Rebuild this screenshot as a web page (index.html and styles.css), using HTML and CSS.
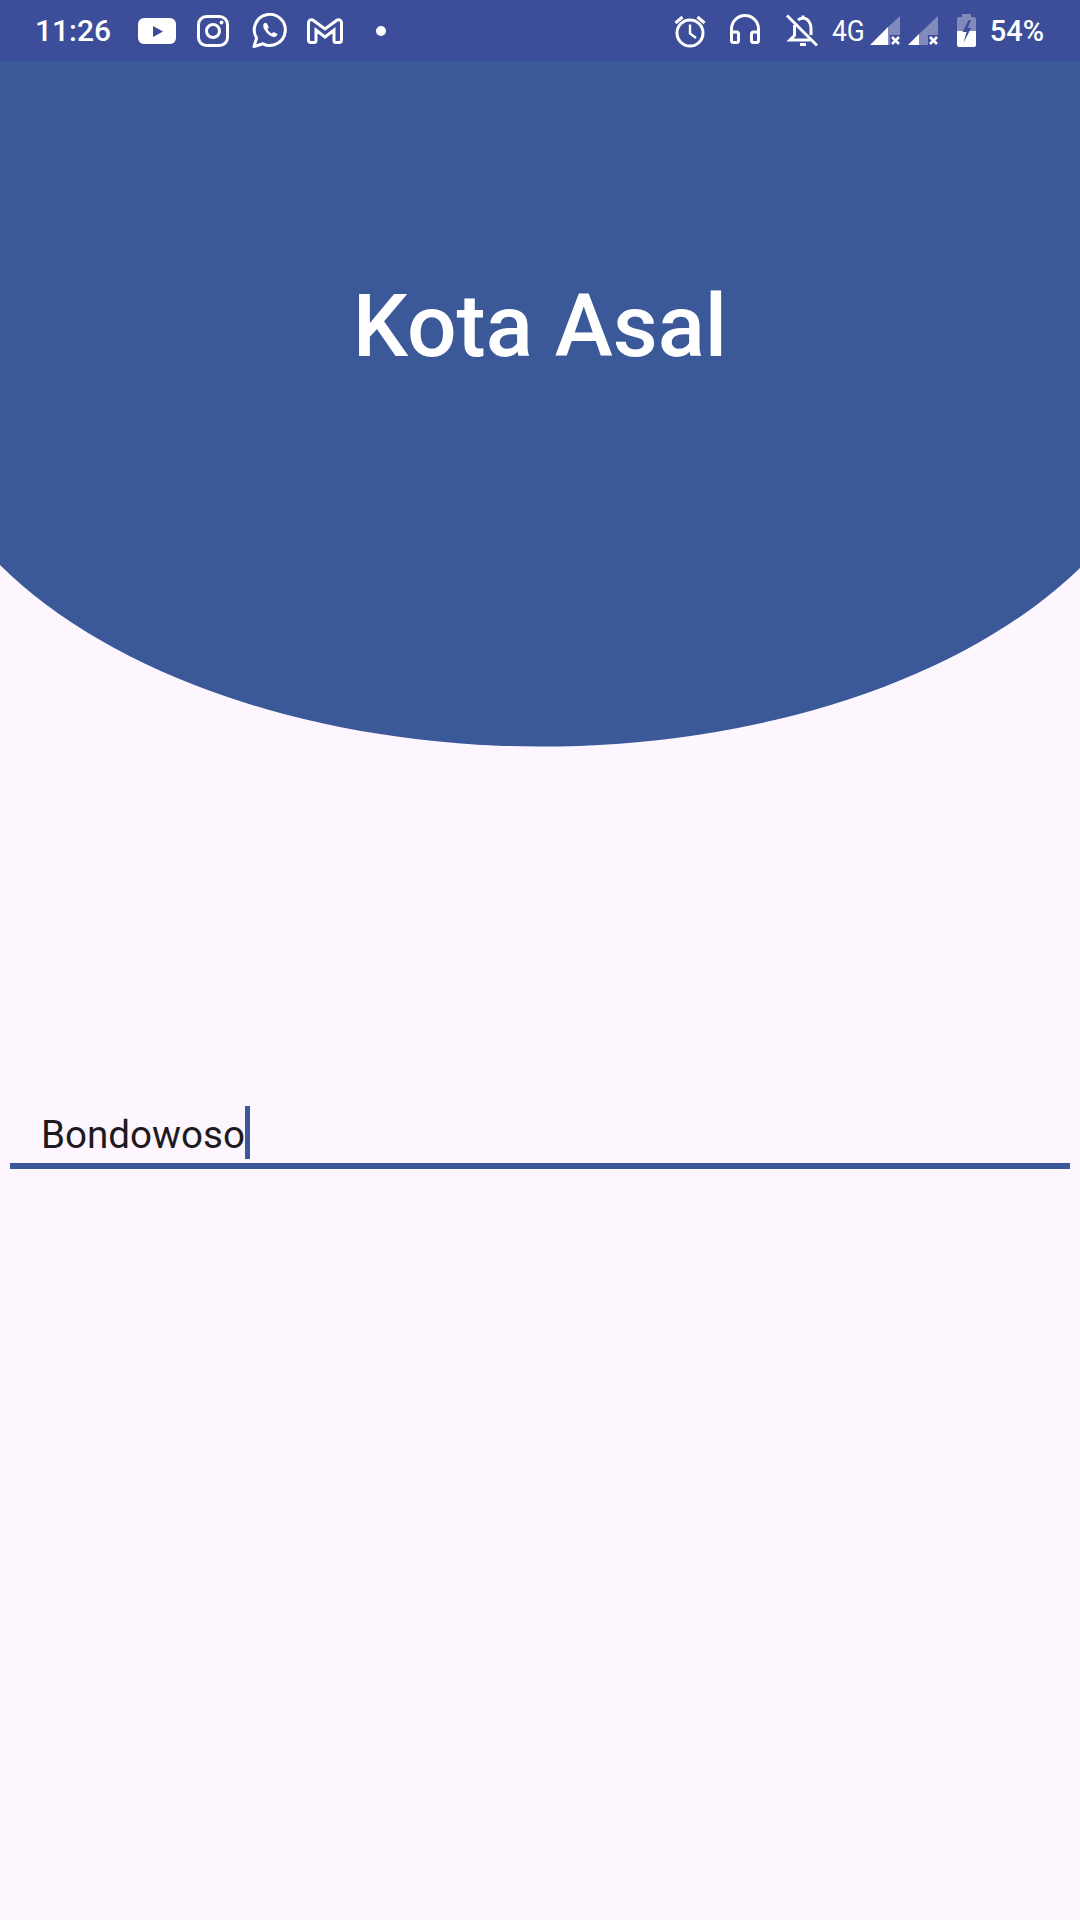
FILE: index.html
```html
<!DOCTYPE html>
<html lang="en">
<head>
    <meta charset="UTF-8">
    <meta name="viewport" content="width=device-width, initial-scale=1.0">
    <title>Kota Asal</title>
    <link rel="stylesheet" href="styles.css">
</head>
<body>

    <div class="status-bar">
        <div class="status-left">
            <span class="clock">11:26</span>
            <svg class="icon-youtube" width="38" height="26" viewBox="0 0 38 26">
                <rect width="38" height="26" rx="6" fill="#fff"/>
                <path d="M15 8 L25 13.5 L15 19 Z" fill="#3c4d99"/>
            </svg>
            <svg class="icon-instagram" width="32" height="32" viewBox="0 0 32 32" fill="none" stroke="#fff" stroke-width="3">
                <rect x="1.5" y="1.5" width="29" height="29" rx="8"/>
                <circle cx="16" cy="16" r="6.5"/>
                <circle cx="24.5" cy="7.5" r="1.9" fill="#fff" stroke="none"/>
            </svg>
            <svg class="icon-whatsapp" width="35" height="35" viewBox="0 0 35 35">
                <path d="M2 33.5 L4.6 25 A15.5 15.5 0 1 1 11 30.8 Z" fill="none" stroke="#fff" stroke-width="3" stroke-linejoin="round"/>
                <path d="M12.5 10 c-1.8 1.5 -1.8 4.2 .8 7.8 c2.5 3.5 5.2 5.7 8.2 6.2 c2 .3 3.6 -1 4 -3 l-4 -2.1 l-1.6 1.6 c-2 -1 -3.5 -2.5 -4.5 -4.5 l1.4 -1.6 l-1.9 -4.2 z" fill="#fff"/>
            </svg>
            <svg class="icon-mail" width="36" height="26" viewBox="0 0 36 26">
                <path d="M1.5 4.5 a3 3 0 0 1 5 -2 L18 11 L29.5 2.5 a3 3 0 0 1 5 2 V22 a2.5 2.5 0 0 1 -2.5 2.5 H29 a2 2 0 0 1 -2 -2 V12 L18 19 L9 12 V22.5 a2 2 0 0 1 -2 2 H4 a2.5 2.5 0 0 1 -2.5 -2.5 Z" fill="none" stroke="#fff" stroke-width="3"/>
            </svg>
            <span class="dot"></span>
        </div>

        <div class="status-right">
            <svg class="icon-alarm" width="32" height="34" viewBox="0 0 32 34" fill="none" stroke="#fff" stroke-width="3">
                <circle cx="16" cy="19" r="13"/>
                <path d="M16 10.5 V19.5 L22 24" stroke-width="2.4"/>
                <path d="M1.5 9 L8.5 3 M30.5 9 L23.5 3"/>
            </svg>
            <svg class="icon-headset" width="30" height="30" viewBox="0 0 30 30" fill="none" stroke="#fff" stroke-width="3">
                <path d="M1.5 24 V15 A13.5 13.5 0 0 1 28.5 15 V24"/>
                <rect x="1.5" y="18" width="7" height="10.5" rx="2"/>
                <rect x="21.5" y="18" width="7" height="10.5" rx="2"/>
            </svg>
            <svg class="icon-bell-off" width="33" height="33" viewBox="0 0 33 33" fill="none" stroke="#fff" stroke-width="3">
                <path d="M2 1.5 L32 31.5"/>
                <path d="M9.5 11 V21.5 L5 26 H25"/>
                <path d="M13 6 C15 4.5 16 4.5 18 4 V1.5 M18 4 C23 4.5 26 9 26 14 V21"/>
                <path d="M15 30.5 H21"/>
            </svg>
            <span class="network">4G</span>
            <svg class="icon-signal" width="30" height="29" viewBox="0 0 30 29">
                <path d="M18 11 L30 0 V19 H20 V29 H18 Z" fill="#fff" opacity="0.35"/>
                <path d="M0 29 L18 11 V29 Z" fill="#fff"/>
                <path d="M22 21 L29 28 M29 21 L22 28" stroke="#fff" stroke-width="2.6"/>
            </svg>
            <svg class="icon-signal" width="30" height="29" viewBox="0 0 30 29">
                <path d="M11 18 L30 0 V19 H20 V29 H11 Z" fill="#fff" opacity="0.35"/>
                <path d="M0 29 L11 18 V29 Z" fill="#fff"/>
                <path d="M22 21 L29 28 M29 21 L22 28" stroke="#fff" stroke-width="2.6"/>
            </svg>
            <svg class="icon-battery" width="19" height="33" viewBox="0 0 19 33">
                <path d="M5 0 H14 V3 H17 a2 2 0 0 1 2 2 V17 H0 V5 a2 2 0 0 1 2 -2 H5 Z" fill="#fff" opacity="0.35"/>
                <path d="M0 17 H19 V31 a2 2 0 0 1 -2 2 H2 a2 2 0 0 1 -2 -2 Z" fill="#fff"/>
                <path d="M11.5 6 L5.5 18 H9.5 L6.5 29 L14 14 H10.5 L14 6 Z" fill="#3c4d99"/>
            </svg>
            <span class="battery-level">54%</span>
        </div>
    </div>

    <header class="hero">
        <h1 class="hero-title">Kota Asal</h1>
    </header>

    <form class="city-form">
        <div class="city-field">
            <span class="city-value">Bondowoso</span><span class="caret"></span>
        </div>
    </form>

</body>
</html>
```

FILE: styles.css
```css
body {
    margin: 0;
    height: 1920px;
    overflow: hidden;
    font-family: 'Roboto', sans-serif;
    background-color: #fdf6ff;
    color: #1d1b20;
}

/* Status bar */
.status-bar {
    display: flex;
    justify-content: space-between;
    align-items: center;
    height: 61px;
    padding: 0 36px 0 35px;
    background-color: #3c4d99;
    color: #fff;
}

.status-left, .status-right {
    display: flex;
    align-items: center;
}

.status-bar svg {
    display: block;
}

.clock {
    width: 75px;
    font-size: 30px;
    font-weight: 500;
}

.icon-youtube { margin-left: 28px; }
.icon-instagram { margin-left: 21px; }
.icon-whatsapp { margin-left: 23px; }
.icon-mail { margin-left: 20px; }

.dot {
    width: 10px;
    height: 10px;
    margin-left: 33px;
    border-radius: 50%;
    background-color: #fff;
}

.icon-headset { margin-left: 24px; margin-bottom: 3px; }
.icon-bell-off { margin-left: 25px; }

.network {
    width: 31px;
    margin-left: 14px;
    font-size: 30px;
    transform: scaleX(0.88);
    transform-origin: left center;
}

.icon-signal { margin-left: 8px; }
.network + .icon-signal { margin-left: 7px; }

.icon-battery { margin-left: 19px; }

.battery-level {
    margin-left: 14px;
    font-size: 29px;
    font-weight: 500;
}

/* Curved header */
.hero {
    display: flex;
    justify-content: center;
    height: 690px;
    background-color: #3b5998;
    clip-path: path("M0 0 H1080 V507 A631 373 0 0 1 0 504 Z");
}

.hero-title {
    margin: 210px 0 0;
    font-size: 87.5px;
    font-weight: 500;
    line-height: 110px;
    color: #fff;
}

/* City input */
.city-form {
    padding: 350px 10px 0;
}

.city-field {
    display: flex;
    align-items: flex-start;
    height: 62px;
    padding-left: 31px;
    border-bottom: 6px solid #3b5998;
}

.city-value {
    margin-top: 2px;
    font-size: 38.6px;
    line-height: 63px;
}

.caret {
    width: 5px;
    height: 53px;
    margin-top: 5px;
    background-color: #3b5998;
}
```
